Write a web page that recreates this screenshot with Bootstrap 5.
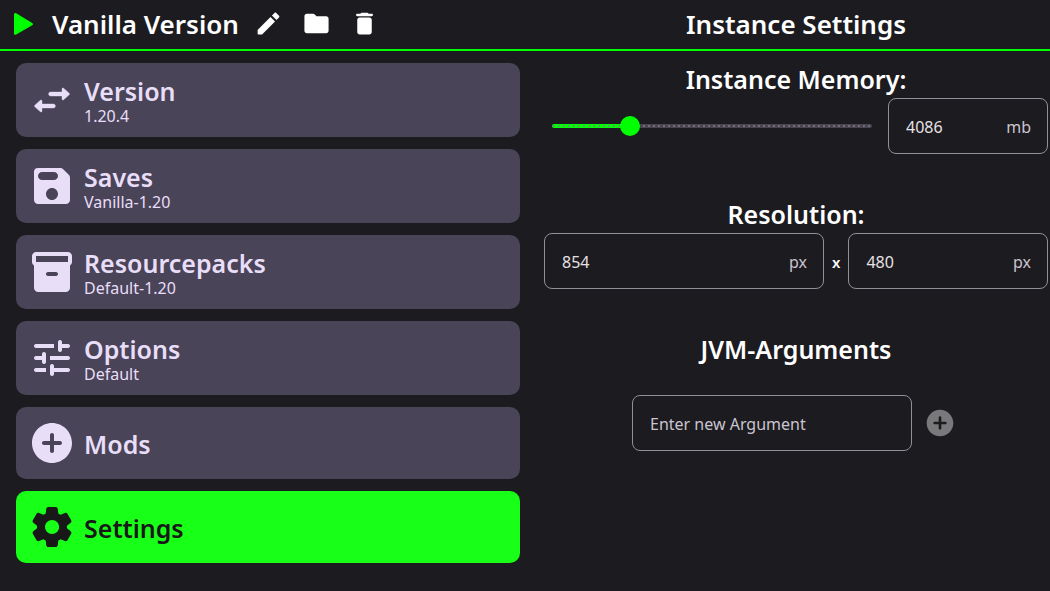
<!DOCTYPE html>
<html lang="en" data-bs-theme="dark">
<head>
<meta charset="utf-8">
<meta name="viewport" content="width=device-width, initial-scale=1">
<title>Vanilla Version – Instance Settings</title>
<link href="https://cdn.jsdelivr.net/npm/bootstrap@5.3.0/dist/css/bootstrap.min.css" rel="stylesheet">
<style>
  body { background: #1c1b1f; color: #fff; font-family: "Noto Sans", "Open Sans", sans-serif; font-size: 16px; line-height: 20px; }
  svg { display: block; fill: currentColor; flex: none; }
  .split { padding: 0 2px 0 16px; gap: 24px; }
  .split > * { flex: 1 1 0; min-width: 0; }
  .topbar { height: 51px; border-bottom: 2px solid #0f0; padding-bottom: 2px; }
  .title { font-size: 25px; line-height: 36px; font-weight: 600; margin: 0; white-space: nowrap; }
  .topbar .title { font-size: 26px; }
  .tool { border: 0; background: none; color: #fff; padding: 0; }
  .run { color: #0f0; margin: 0 19px 0 -2px; }
  .tools { gap: 19px; margin-left: 15px; }
  .menu { gap: 12px; padding-top: 12px; }
  .entry { border: 0; border-radius: 10px; background: #4a4458; color: #e8def8; min-height: 72px; padding: 0 12px; gap: 8px; text-align: left; }
  .entry.tall { min-height: 74px; }
  .entry-text { padding-top: 2px; }
  .tall .entry-text { padding-top: 4px; }
  .entry-name { font-size: 25px; line-height: 28px; font-weight: 600; display: block; }
  .entry-info { display: block; line-height: 22px; }
  .entry.current { background: #18ff18; color: #181818; }
  .panel { padding-top: 10px; }
  .section { margin-bottom: 42px; }
  .section .title { margin-bottom: 1px; }
  .field { height: 56px; border: 1px solid #938f99; border-radius: 8px; padding: 2px 16px 0 17px; color: #cac4d0; }
  .field input { background: none; border: 0; outline: 0; color: #e6e1e5; width: 100%; min-width: 0; padding: 0; }
  .field input::placeholder { color: #cac4d0; opacity: 1; }
  .memory { width: 160px; flex: none; }
  .wide { width: 280px; flex: none; }
  .slide { appearance: none; background: none; height: 20px; margin: 0 16px 0 8px; min-width: 0; }
  .slide::-webkit-slider-runnable-track {
    height: 4px; border-radius: 2px;
    background:
      repeating-linear-gradient(90deg, transparent 0 1px, rgba(125, 121, 135, .75) 1px 3px, transparent 3px 5px) 0 1px / 100% 2px no-repeat,
      linear-gradient(90deg, #0f0 var(--fill), #49454f var(--fill));
  }
  .slide::-webkit-slider-thumb { appearance: none; width: 20px; height: 20px; margin-top: -8px; border-radius: 50%; background: #0f0; }
  .times { font-weight: 600; font-size: 15px; padding-top: 2px; }
  .add { color: #79787b; padding: 4px; }
</style>
</head>
<body>
<header class="topbar split d-flex align-items-center">
  <div class="d-flex align-items-center">
    <button class="tool run" aria-label="Play"><svg width="19" height="24" viewBox="0 0 19 24"><path d="M0 2.500c0-1.400 1-2 2.200-1.200l16 9.600c1.100.7 1.100 1.700 0 2.400l-16 9.200C1 23.200 0 22.600 0 21.200z"/></svg></button>
    <h1 class="title">Vanilla Version</h1>
    <div class="tools d-flex">
      <button class="tool" aria-label="Rename"><svg width="29" height="29" viewBox="0 0 24 24"><path d="M3 17.460v3.040c0 .28.22.5.5.5h3.040c.13 0 .26-.05.35-.15L17.400 10.350l-3.750-3.750L3.150 17.100c-.1.1-.15.22-.15.36zM20.710 7.040c.39-.39.39-1.020 0-1.410l-2.340-2.340c-.39-.39-1.020-.39-1.410 0l-2.100 2.100 3.750 3.750 2.100-2.100z"/></svg></button>
      <button class="tool" aria-label="Open folder"><svg width="29" height="29" viewBox="0 0 24 24"><path d="M10.590 4.590C10.210 4.210 9.700 4 9.170 4H4c-1.100 0-1.990.9-1.990 2L2 18c0 1.100.9 2 2 2h16c1.100 0 2-.9 2-2V8c0-1.100-.9-2-2-2h-8l-1.410-1.410z"/></svg></button>
      <button class="tool" aria-label="Delete"><svg width="29" height="29" viewBox="0 0 24 24"><path d="M6 19c0 1.100.9 2 2 2h8c1.100 0 2-.9 2-2V9c0-1.100-.9-2-2-2H8c-1.100 0-2 .9-2 2v10zM18 4h-2.500l-.71-.71c-.18-.18-.44-.29-.7-.29H9.910c-.26 0-.52.11-.7.29L8.500 4H6c-.55 0-1 .45-1 1s.45 1 1 1h12c.55 0 1-.45 1-1s-.45-1-1-1z"/></svg></button>
    </div>
  </div>
  <h2 class="title text-center">Instance Settings</h2>
</header>

<main class="split d-flex align-items-start">
  <nav class="menu d-flex flex-column" aria-label="Instance">
    <button class="entry tall d-flex align-items-center">
      <svg width="48" height="48" viewBox="0 0 24 24"><path d="M17 8h-5.700c-.55 0-1 .45-1 1s.45 1 1 1H17v1.500c0 .45.5.65.8.35l2.800-2.500c.2-.2.2-.5 0-.7l-2.800-2.500c-.3-.3-.8-.1-.8.35zM7 14h5.700c.55 0 1 .45 1 1s-.45 1-1 1H7v1.500c0 .45-.5.65-.8.35l-2.800-2.500c-.2-.2-.2-.5 0-.7l2.800-2.500c.3-.3.8-.1.8.35z" stroke="currentColor" stroke-width=".2"/></svg>
      <span class="entry-text"><span class="entry-name">Version</span><span class="entry-info">1.20.4</span></span>
    </button>
    <button class="entry tall d-flex align-items-center">
      <svg width="48" height="48" viewBox="0 0 24 24"><path d="M17.590 3.590c-.38-.38-.89-.59-1.420-.59H5a2 2 0 0 0-2 2v14c0 1.100.9 2 2 2h14c1.100 0 2-.9 2-2V7.830c0-.53-.21-1.040-.59-1.410l-2.820-2.830zM12 19c-1.660 0-3-1.340-3-3s1.340-3 3-3 3 1.340 3 3-1.340 3-3 3zm1-10H7c-1.100 0-2-.9-2-2s.9-2 2-2h6c1.100 0 2 .9 2 2s-.9 2-2 2z"/></svg>
      <span class="entry-text"><span class="entry-name">Saves</span><span class="entry-info">Vanilla-1.20</span></span>
    </button>
    <button class="entry tall d-flex align-items-center">
      <svg width="48" height="48" viewBox="0 0 24 24"><path d="M20 2H4c-1 0-2 .9-2 2v3.010c0 .72.43 1.340 1 1.690V20c0 1.100 1.100 2 2 2h14c.9 0 2-.9 2-2V8.700c.57-.35 1-.97 1-1.690V4c0-1.100-1-2-2-2zm-6 12h-4c-.55 0-1-.45-1-1s.45-1 1-1h4c.55 0 1 .45 1 1s-.45 1-1 1zm6-7H4V4h16v3z"/></svg>
      <span class="entry-text"><span class="entry-name">Resourcepacks</span><span class="entry-info">Default-1.20</span></span>
    </button>
    <button class="entry tall d-flex align-items-center">
      <svg width="48" height="48" viewBox="0 0 24 24"><path d="M3 18c0 .55.45 1 1 1h5v-2H4c-.55 0-1 .45-1 1zM3 6c0 .55.45 1 1 1h9V5H4c-.55 0-1 .45-1 1zm10 14v-1h7c.55 0 1-.45 1-1s-.45-1-1-1h-7v-1c0-.55-.45-1-1-1s-1 .45-1 1v4c0 .55.45 1 1 1s1-.45 1-1zM7 10v1H4c-.55 0-1 .45-1 1s.45 1 1 1h3v1c0 .55.45 1 1 1s1-.45 1-1v-4c0-.55-.45-1-1-1s-1 .45-1 1zm14 2c0-.55-.45-1-1-1h-9v2h9c.55 0 1-.45 1-1zm-5-3c.55 0 1-.45 1-1V7h3c.55 0 1-.45 1-1s-.45-1-1-1h-3V4c0-.55-.45-1-1-1s-1 .45-1 1v4c0 .55.45 1 1 1z"/></svg>
      <span class="entry-text"><span class="entry-name">Options</span><span class="entry-info">Default</span></span>
    </button>
    <button class="entry d-flex align-items-center">
      <svg width="48" height="48" viewBox="0 0 24 24"><path d="M12 2C6.480 2 2 6.480 2 12s4.480 10 10 10 10-4.480 10-10S17.520 2 12 2zm4 11h-3v3c0 .55-.45 1-1 1s-1-.45-1-1v-3H8c-.55 0-1-.45-1-1s.45-1 1-1h3V8c0-.55.45-1 1-1s1 .45 1 1v3h3c.55 0 1 .45 1 1s-.45 1-1 1z"/></svg>
      <span class="entry-text entry-name">Mods</span>
    </button>
    <button class="entry current d-flex align-items-center" aria-current="page">
      <svg width="48" height="48" viewBox="0 0 24 24"><path d="M19.500 12c0-.23-.01-.45-.03-.68l1.860-1.410c.4-.3.51-.86.26-1.300l-1.870-3.230c-.25-.44-.79-.62-1.250-.42l-2.150.91c-.37-.26-.76-.49-1.170-.68l-.29-2.310c-.06-.5-.49-.88-.99-.88h-3.730c-.51 0-.94.38-1 .88l-.29 2.310c-.41.19-.8.42-1.170.68l-2.150-.91c-.46-.2-1-.02-1.250.42L2.410 8.620c-.25.44-.14.99.26 1.300l1.860 1.410c-.02.22-.03.44-.03.67s.01.45.03.68l-1.860 1.410c-.4.3-.51.86-.26 1.300l1.870 3.230c.25.44.79.62 1.250.42l2.150-.91c.37.26.76.49 1.170.68l.29 2.310c.06.5.49.88.99.88h3.730c.5 0 .93-.38.99-.88l.29-2.310c.41-.19.8-.42 1.170-.68l2.150.91c.46.2 1 .02 1.250-.42l1.870-3.230c.25-.44.14-.99-.26-1.300l-1.860-1.410c.03-.23.04-.45.04-.68zm-7.460 3.500c-1.930 0-3.500-1.570-3.500-3.500s1.570-3.500 3.500-3.500 3.500 1.570 3.500 3.500-1.570 3.500-3.500 3.500z"/></svg>
      <span class="entry-text entry-name">Settings</span>
    </button>
  </nav>

  <div class="panel">
    <section class="section">
      <h3 class="title text-center">Instance Memory:</h3>
      <div class="d-flex align-items-center">
        <input class="slide flex-grow-1" type="range" min="0" max="18024" step="1" value="4086" aria-label="Instance memory" style="--fill: 24%">
        <label class="field memory d-flex align-items-center"><input type="text" value="4086" aria-label="Memory in megabytes"><span>mb</span></label>
      </div>
    </section>
    <section class="section">
      <h3 class="title text-center">Resolution:</h3>
      <div class="d-flex align-items-center gap-2">
        <label class="field wide d-flex align-items-center"><input type="text" value="854" aria-label="Width in pixels"><span>px</span></label>
        <span class="times">x</span>
        <label class="field flex-grow-1 d-flex align-items-center"><input type="text" value="480" aria-label="Height in pixels"><span>px</span></label>
      </div>
    </section>
    <section class="section">
      <h3 class="title text-center">JVM-Arguments</h3>
      <div class="d-flex align-items-center justify-content-center gap-2 pt-4 mt-1">
        <label class="field wide d-flex align-items-center"><input type="text" placeholder="Enter new Argument" aria-label="New argument"></label>
        <button class="tool add" aria-label="Add argument"><svg width="32" height="32" viewBox="0 0 24 24"><path d="M12 2C6.480 2 2 6.480 2 12s4.480 10 10 10 10-4.480 10-10S17.520 2 12 2zm4 11h-3v3c0 .55-.45 1-1 1s-1-.45-1-1v-3H8c-.55 0-1-.45-1-1s.45-1 1-1h3V8c0-.55.45-1 1-1s1 .45 1 1v3h3c.55 0 1 .45 1 1s-.45 1-1 1z"/></svg></button>
      </div>
    </section>
  </div>
</main>
<script src="https://cdn.jsdelivr.net/npm/bootstrap@5.3.0/dist/js/bootstrap.bundle.min.js"></script>
</body>
</html>
